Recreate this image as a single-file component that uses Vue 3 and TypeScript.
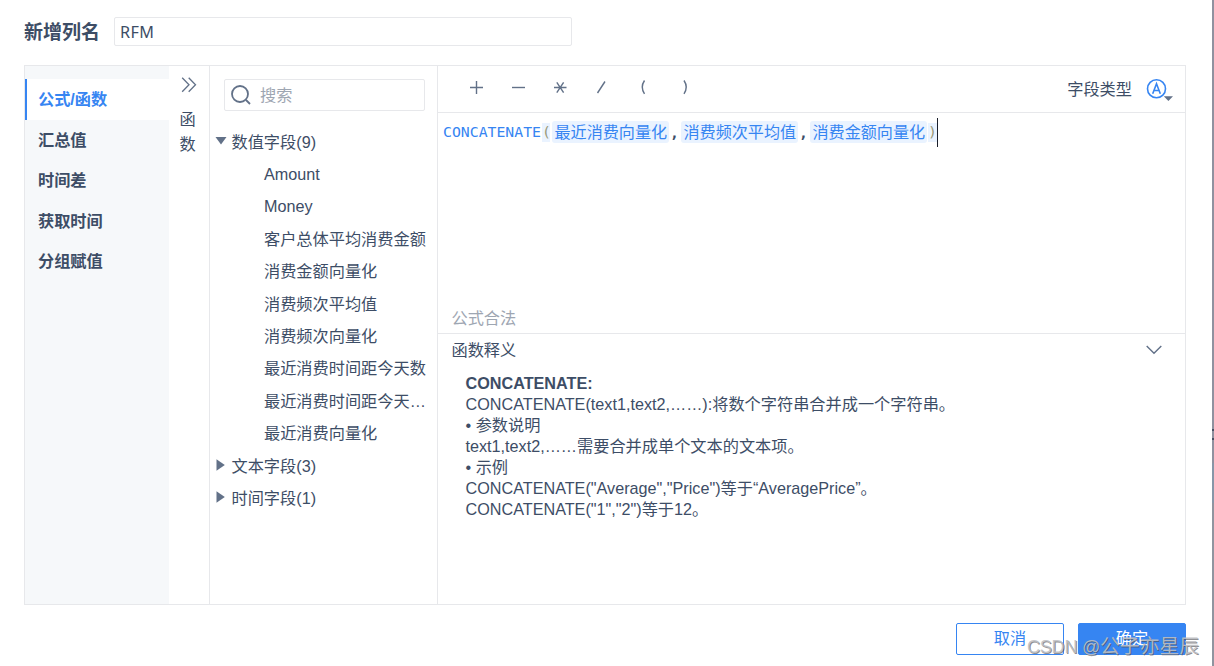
<script setup lang="ts">
import { ref } from 'vue'

const columnName = ref('RFM')
const modes: string[] = ['公式/函数', '汇总值', '时间差', '获取时间', '分组赋值']
const active = ref(0)
const operators: string[] = ['+', '−', '*', '/', '(', ')']
const numericFields: string[] = [
  'Amount',
  'Money',
  '客户总体平均消费金额',
  '消费金额向量化',
  '消费频次平均值',
  '消费频次向量化',
  '最近消费时间距今天数',
  '最近消费时间距今天…',
  '最近消费向量化',
]
const args: string[] = ['最近消费向量化', '消费频次平均值', '消费金额向量化']
const help: string[] = [
  'CONCATENATE(text1,text2,……):将数个字符串合并成一个字符串。',
  '• 参数说明',
  'text1,text2,……需要合并成单个文本的文本项。',
  '• 示例',
  'CONCATENATE("Average","Price")等于“AveragePrice”。',
  'CONCATENATE("1","2")等于12。',
]
</script>

<template>
  <main class="dialog">
    <header class="name-row">
      <span class="name-label">新增列名</span>
      <div class="name-input">{{ columnName }}</div>
    </header>

    <section class="panel">
      <nav class="modes">
        <div
          v-for="(m, i) in modes"
          :key="m"
          class="mode"
          :class="{ active: i === active }"
          @click="active = i"
        >{{ m }}</div>
      </nav>

      <div class="func-strip">
        <svg class="dbl" width="16" height="16" viewBox="0 0 16 16">
          <path d="M1.2 .8 8 7.8 1.2 14.8M7.700 .8l6.800 7-6.800 7" />
        </svg>
        <span>函</span>
        <span>数</span>
      </div>

      <aside class="fields">
        <div class="search">
          <svg width="20" height="20" viewBox="0 0 20 20">
            <circle cx="9" cy="9" r="8" />
            <path d="M15 15l4 4" />
          </svg>
          <span>搜索</span>
        </div>
        <div class="group">
          <svg width="12" height="8" viewBox="0 0 12 8"><path d="M.5 0h11L6 7.5z" /></svg>
          <span>数值字段(9)</span>
        </div>
        <div v-for="f in numericFields" :key="f" class="field">{{ f }}</div>
        <div class="group closed">
          <svg width="12" height="12" viewBox="0 0 12 12"><path d="M1.5 .3v11.400L9.800 6z" /></svg>
          <span>文本字段(3)</span>
        </div>
        <div class="group closed">
          <svg width="12" height="12" viewBox="0 0 12 12"><path d="M1.5 .3v11.400L9.800 6z" /></svg>
          <span>时间字段(1)</span>
        </div>
      </aside>

      <div class="work">
        <div class="toolbar">
          <div class="ops">
            <svg v-for="op in operators" :key="op" class="op" width="16" height="18" viewBox="0 0 16 18">
              <path v-if="op === '+'" d="M2 9.5h13M8.500 3v13" />
              <path v-else-if="op === '−'" d="M2 9.5h13" />
              <path v-else-if="op === '*'" d="M2 9.5h12.5M4.8 4.3l6.8 10.4M11.6 4.3 4.8 14.7" />
              <path v-else-if="op === '/'" d="M12 3.5 4.5 15" />
              <path v-else-if="op === '('" d="M9.5 2.5q-4.5 6.700 0 13.400" />
              <path v-else d="M7 2.5q4.500 6.700 0 13.400" />
            </svg>
          </div>
          <span class="type-label">字段类型</span>
          <svg class="type-icon" width="28" height="24" viewBox="0 0 28 24">
            <circle cx="10.5" cy="10.800" r="9" />
            <path class="letter" d="M6.700 15.800 10.500 5.700l3.800 10.100M8 12.500h5" />
            <path class="caret" d="M17.800 18.200h9.200l-4.600 4.900z" />
          </svg>
        </div>

        <div class="editor">
          <div class="code">
            <span class="fn">CONCATENATE</span>
            <span class="paren">(</span>
            <template v-for="(a, i) in args" :key="a">
              <span class="tag">{{ a }}</span>
              <span v-if="i < args.length - 1" class="comma">,</span>
            </template>
            <span class="paren end">)</span>
            <i class="cursor"></i>
          </div>
          <div class="status">公式合法</div>
        </div>

        <div class="help">
          <div class="help-head">
            <span>函数释义</span>
            <svg width="18" height="10" viewBox="0 0 18 10"><path d="M1.700 1l7.300 7.300L16.300 1" /></svg>
          </div>
          <div class="help-body">
            <strong>CONCATENATE:</strong>
            <div v-for="h in help" :key="h">{{ h }}</div>
          </div>
        </div>
      </div>
    </section>

    <footer class="actions">
      <button class="btn">取消</button>
      <button class="btn primary">确定</button>
    </footer>

    <div class="edge"></div>
    <div class="watermark"><span class="latin">CSDN @</span>公子亦星辰</div>
  </main>
</template>

<style>
body {
  overflow: hidden;
}
</style>

<style scoped>
.dialog {
  position: relative;
  box-sizing: border-box;
  width: 1214px;
  height: 666px;
  padding: 17px 28px 0 24px;
  background: #fff;
  color: #3d4d66;
  font: 16.2px/20px "Liberation Sans", "Noto Sans CJK SC", sans-serif;
  overflow: hidden;
}
.dialog * {
  box-sizing: border-box;
}
svg {
  display: block;
  flex: none;
  fill: none;
  stroke: #627188;
}
.name-row {
  display: flex;
  height: 29px;
}
.name-label {
  width: 90px;
  font-size: 19px;
  font-weight: 700;
  line-height: 32px;
  white-space: nowrap;
}
.name-input {
  width: 458px;
  border: 1px solid #e7e8eb;
  border-radius: 2px;
  padding-left: 5px;
  font: 16.2px/28px "Noto Sans", sans-serif;
  letter-spacing: 0.4px;
}
.panel {
  display: flex;
  width: 1162px;
  height: 540px;
  margin-top: 19px;
  border: 1px solid #e7e8eb;
}
.modes {
  width: 144px;
  padding-top: 13px;
  background: #f6f8fa;
}
.mode {
  height: 40.5px;
  padding-left: 13px;
  font-weight: 700;
  line-height: 40px;
}
.mode.active {
  padding-left: 11px;
  border-left: 2px solid #3685f2;
  background: #fff;
  color: #3685f2;
}
.func-strip {
  display: flex;
  flex-direction: column;
  width: 41px;
  padding-left: 10.5px;
  border-right: 1px solid #e7e8eb;
  line-height: 25px;
}
.dbl {
  margin: 11px 0 14px 1.5px;
  stroke-width: 1.3;
}
.fields {
  width: 228px;
  padding-top: 13px;
  border-right: 1px solid #e7e8eb;
  white-space: nowrap;
}
.search {
  display: flex;
  align-items: center;
  gap: 9px;
  width: 201px;
  height: 32px;
  margin: 0 0 14.600px 14px;
  padding-left: 6px;
  border: 1px solid #e7e8eb;
  border-radius: 2px;
  color: #9ea6b2;
}
.search svg {
  stroke-width: 1.8;
}
.group {
  display: flex;
  align-items: center;
  height: 32.4px;
  padding-left: 5px;
}
.group svg {
  margin: -2px 4.5px 0 0;
  fill: #627188;
  stroke: none;
}
.field {
  height: 32.4px;
  padding-left: 54px;
  line-height: 32.4px;
}
.work {
  display: flex;
  flex: 1;
  flex-direction: column;
}
.toolbar {
  display: flex;
  align-items: center;
  height: 47px;
  padding: 0 11px 0 30px;
  border-bottom: 1px solid #e7e8eb;
}
.ops {
  display: flex;
  flex: 1;
  gap: 25.8px;
  margin-top: -4px;
}
.op {
  stroke-width: 1.4;
}
.type-icon {
  margin: 1px 0 0 14px;
  stroke: #3685f2;
  stroke-width: 1.6;
}
.type-icon .caret {
  fill: #627188;
  stroke: none;
}
.editor {
  display: flex;
  flex-direction: column;
  justify-content: space-between;
  height: 221px;
  padding: 5px 0 5px 5px;
  border-bottom: 1px solid #e7e8eb;
}
.code {
  display: flex;
  align-items: center;
  height: 29px;
  font-family: "DejaVu Sans Mono", "Noto Sans CJK SC", monospace;
  font-size: 14.8px;
  white-space: nowrap;
}
.fn {
  width: 99px;
  margin-top: -2px;
  color: #3685f2;
}
.paren {
  width: 8px;
  height: 19px;
  background: #eaf3ff;
  color: #999977;
  line-height: 18px;
}
.tag {
  width: 117px;
  height: 22px;
  margin: 0 0 1px 2px;
  padding-left: 2.5px;
  border-radius: 3px;
  background: #eaf3ff;
  color: #3685f2;
  font: 16.1px/20px "Noto Sans CJK SC", sans-serif;
}
.comma {
  width: 10px;
  padding-left: 1px;
  font-weight: 700;
}
.paren.end {
  width: 9px;
  margin-left: 1px;
}
.cursor {
  width: 1px;
  height: 29px;
  background: #1a1f2b;
}
.status {
  padding-left: 8.5px;
  color: #9ea6b2;
}
.help-head {
  display: flex;
  align-items: center;
  justify-content: space-between;
  height: 32px;
  padding: 0 22px 0 13.5px;
}
.help-head svg {
  stroke-width: 1.4;
}
.help-body {
  padding: 7px 0 0 27.5px;
  line-height: 21px;
}
.help-body strong {
  display: block;
}
.help-body div {
  height: 21px;
}
.actions {
  display: flex;
  justify-content: flex-end;
  gap: 14px;
  margin-top: 18px;
}
.btn {
  width: 108px;
  height: 32px;
  padding: 0 0 2px;
  border: 1px solid #3685f2;
  border-radius: 2px;
  background: #fff;
  color: #3685f2;
  font: inherit;
}
.btn.primary {
  background: #3685f2;
  color: #fff;
}
.edge {
  position: absolute;
  top: 0;
  right: 0;
  width: 2px;
  height: 666px;
  background: linear-gradient(
    #90919f 429px,
    #4a5064 429px 431px,
    #90919f 431px 438px,
    #4a5064 438px 440px,
    #90919f 440px 463px,
    #8796a8 463px 503px,
    #90949f 503px
  );
}
.watermark {
  position: absolute;
  top: 632px;
  left: 1027px;
  color: rgba(190, 192, 196, 0.9);
  font-size: 19.8px;
  line-height: 28px;
  text-shadow: 1px 1px 0 rgba(80, 80, 85, 0.65);
  white-space: nowrap;
}
.latin {
  font-size: 18px;
  letter-spacing: -0.2px;
}
</style>
